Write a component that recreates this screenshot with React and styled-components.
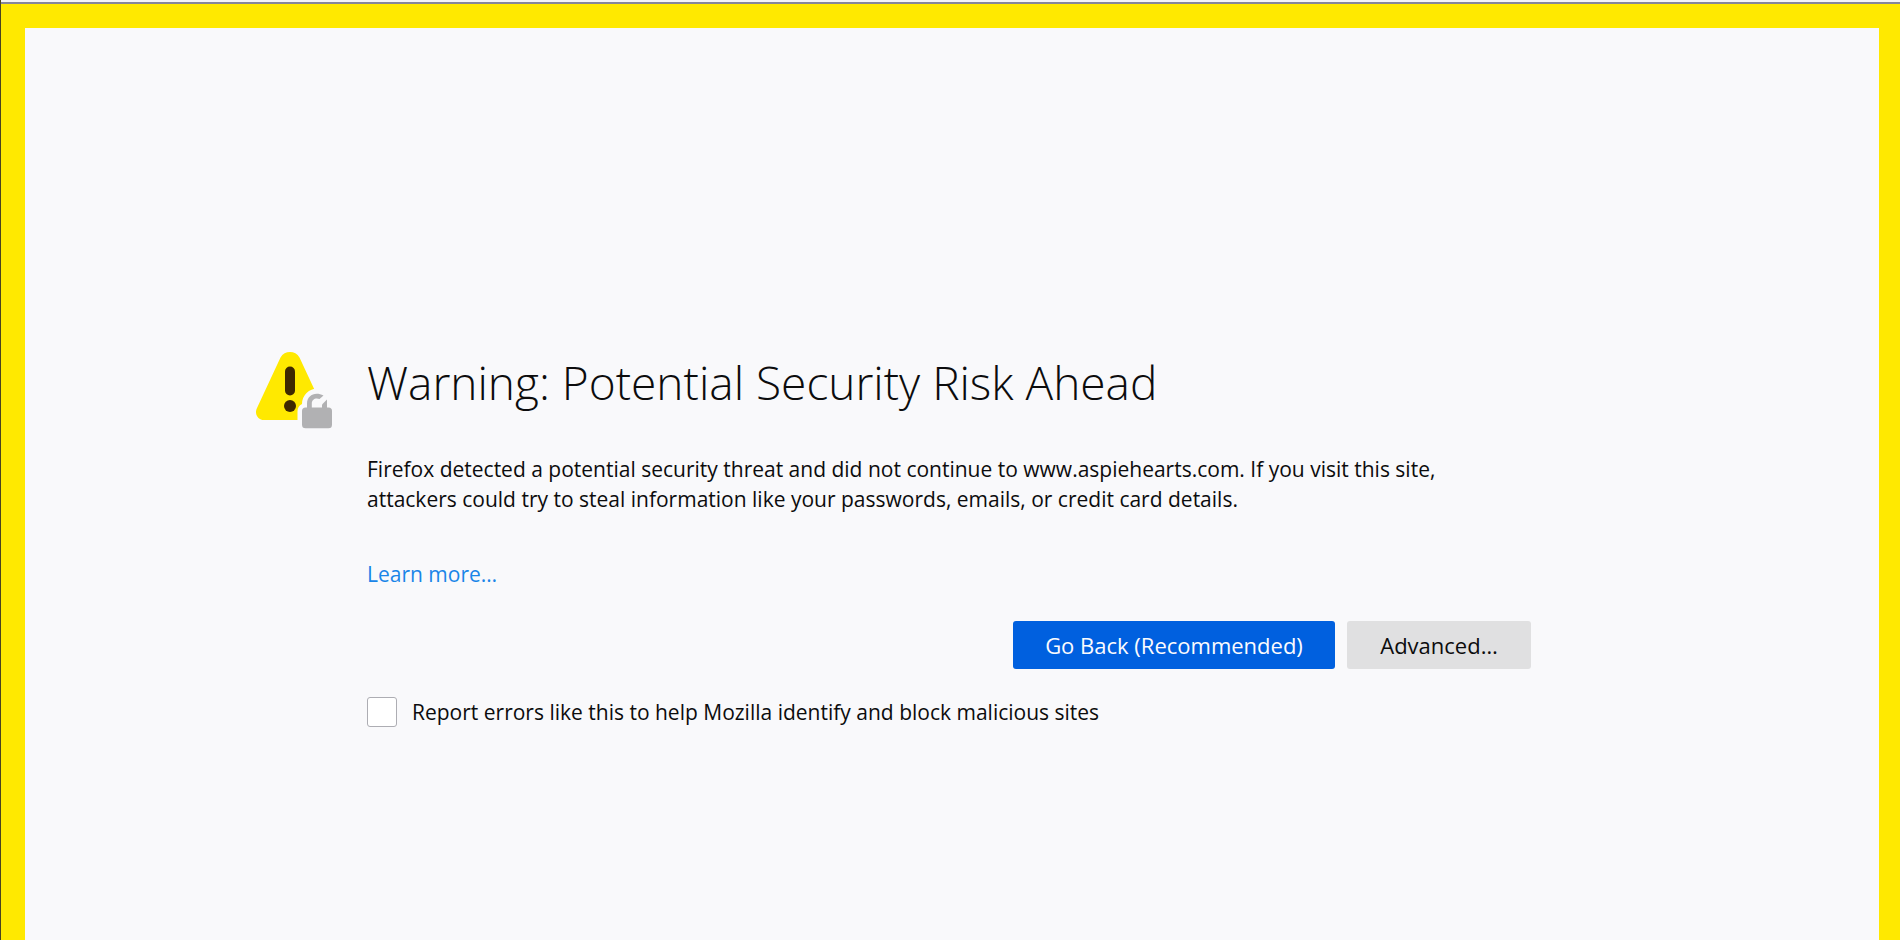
import React from "react";
import styled, { createGlobalStyle } from "styled-components";

const GlobalStyle = createGlobalStyle`
  *, *::before, *::after { box-sizing: border-box; }
  body {
    margin: 0;
    background: #f9f9fb;
    color: #0c0c0d;
    font-family: "Segoe UI", "Open Sans", "Noto Sans", sans-serif;
    font-size: 21px;
    line-height: 30px;
  }
`;

const Window = styled.div`
  display: flex;
  flex-direction: column;
  min-height: 100vh;
  border-left: 1px solid #4a4420;
`;

const WindowEdge = styled.div`
  height: 4px;
  border-bottom: 2px solid #85869a;
  background: #f4f4f8;
`;

const CautionFrame = styled.div`
  flex: 1;
  border: solid #ffe900;
  border-width: 24px 21px 0 24px;
`;

const Layout = styled.main`
  display: grid;
  grid-template-columns: 1fr minmax(0, 1164px) 1fr;
  padding: 320px 6px 64px 0;
`;

const IconCell = styled.div`
  display: flex;
  justify-content: flex-end;
  padding: 4px 34px 0 0;
`;

const Content = styled.div`
  display: flex;
  flex-direction: column;
`;

const Title = styled.h1`
  margin: 0 0 38px;
  font-size: 46px;
  font-weight: 300;
  line-height: 68px;
`;

const Message = styled.p`
  max-width: 1100px;
  margin: 0 0 45px;
`;

const LearnMore = styled.a`
  align-self: flex-start;
  color: #1a85e8;
  text-decoration: none;
  &:hover { text-decoration: underline; }
`;

const Actions = styled.div`
  display: flex;
  justify-content: flex-end;
  gap: 12px;
  margin: 32px 0 28px;
`;

const Button = styled.button`
  min-width: ${(p) => (p.$primary ? 322 : 184)}px;
  height: 48px;
  padding: 0 30px;
  border: 0;
  border-radius: 3px;
  background: ${(p) => (p.$primary ? "#0060df" : "#e0e0e1")};
  color: ${(p) => (p.$primary ? "#fbfbfe" : "#0c0c0d")};
  font: inherit;
  font-size: 22px;
`;

const ReportLabel = styled.label`
  display: flex;
  align-items: center;
  gap: 15px;
`;

const Checkbox = styled.input`
  appearance: none;
  width: 30px;
  height: 30px;
  margin: 0;
  border: 1px solid #adadb3;
  border-radius: 3px;
  background: #fff;
  &:checked { background: #0060df; }
`;

function InsecureWarningIcon() {
  return (
    <svg width="77" height="77" viewBox="0 0 77 77" role="img" aria-label="Insecure connection">
      <path
        d="M24.500 5.500C28.500-1.800 39.500-1.800 43.500 5.500L67 56C70 62 66 68 60 68H8C2 68-2 62 1 56Z"
        fill="#ffe900"
      />
      <path d="M34 19.500v19" stroke="#3e2800" strokeWidth="10" strokeLinecap="round" />
      <circle cx="34" cy="54" r="6" fill="#3e2800" />
      {/* Gap in the page colour that separates the padlock from the triangle */}
      <path
        d="M46 52A15.500 15.500 0 0 1 77 52V77H41.500V59.500Q41.500 54 46 52Z"
        fill="#f9f9fb"
      />
      <rect x="46" y="55.500" width="30" height="20.800" rx="3.500" fill="#b1b1b3" />
      <path
        d="M51 57V51.500C51 43 59.500 39 67.500 43.500L63.500 47C59.500 45.300 55.800 47.500 55.800 51.500V57Z"
        fill="#b1b1b3"
      />
      <path d="M66 57V52.500L71 47.500V57Z" fill="#b1b1b3" />
    </svg>
  );
}

export default function App() {
  return (
    <>
      <GlobalStyle />
      <Window>
        <WindowEdge />
        <CautionFrame>
          <Layout>
            <IconCell>
              <InsecureWarningIcon />
            </IconCell>
            <Content>
              <Title>Warning: Potential Security Risk Ahead</Title>
              <Message>
                Firefox detected a potential security threat and did not continue to
                www.aspiehearts.com. If you visit this site, attackers could try to steal
                information like your passwords, emails, or credit card details.
              </Message>
              <LearnMore href="#learn-more">Learn more…</LearnMore>
              <Actions>
                <Button type="button" $primary>Go Back (Recommended)</Button>
                <Button type="button">Advanced…</Button>
              </Actions>
              <ReportLabel>
                <Checkbox type="checkbox" />
                Report errors like this to help Mozilla identify and block malicious sites
              </ReportLabel>
            </Content>
          </Layout>
        </CautionFrame>
      </Window>
    </>
  );
}
